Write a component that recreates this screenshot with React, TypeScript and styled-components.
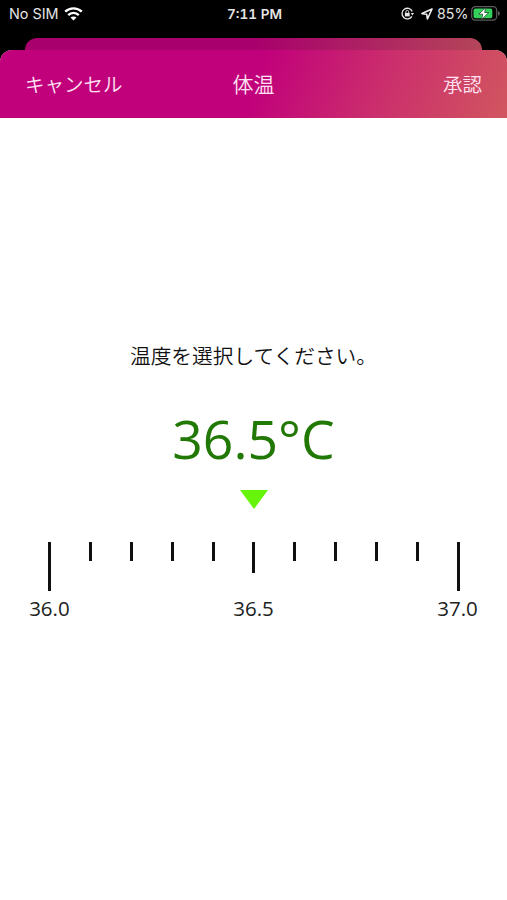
import React from "react";
import styled, { createGlobalStyle } from "styled-components";

const GlobalStyle = createGlobalStyle`
  * { box-sizing: border-box; }
  body { margin: 0; background: #000; }
`;

const Screen = styled.div`
  width: 507px;
  height: 900px;
  display: flex;
  flex-direction: column;
  background: #000;
  overflow: hidden;
  font-family: "Open Sans", "Noto Sans CJK JP", sans-serif;
`;

const StatusBar = styled.div`
  height: 38px;
  padding: 4px 7px 0 9px;
  display: grid;
  grid-template-columns: 1fr auto 1fr;
  align-items: start;
  color: #e4e4e4;
  font: 400 14.6px/20px Inter, sans-serif;
`;

const StatusGroup = styled.div<{ $end?: boolean }>`
  display: flex;
  align-items: center;
  height: 19px;
  justify-content: ${(p) => (p.$end ? "flex-end" : "flex-start")};
`;

const Carrier = styled.span`
  width: 50px;
  margin-right: 5px;
  font-size: 14.4px;
  white-space: nowrap;
`;

const Clock = styled.span`
  font-size: 13.6px;
  font-weight: 600;
  font-variant-numeric: tabular-nums;
  line-height: 20px;
`;

const Percent = styled.span`
  width: 31px;
  margin: 0 3px 0 4px;
  font-size: 14.2px;
  white-space: nowrap;
`;

const Glyph = styled.svg<{ $gap?: number }>`
  display: block;
  flex: none;
  margin-right: ${(p) => p.$gap ?? 0}px;
`;

const BackCard = styled.div`
  height: 12px;
  margin: 0 25px;
  border-radius: 12px 12px 0 0;
  background: linear-gradient(110deg, #a8006c 0%, #a8006c 50%, #b44659 100%);
`;

const Sheet = styled.section`
  flex: 1;
  display: flex;
  flex-direction: column;
  border-radius: 12px 12px 0 0;
  background: #fff;
  overflow: hidden;
`;

const NavBar = styled.header`
  height: 68px;
  padding: 0 25px;
  display: grid;
  grid-template-columns: 1fr auto 1fr;
  align-items: center;
  background: linear-gradient(110deg, #c1007b 0%, #c1007b 50%, #cb2f6c 75%, #d1565f 100%);
  color: #ffe3f4;
`;

const NavButton = styled.button<{ $end?: boolean }>`
  border: 0;
  padding: 0;
  background: none;
  color: inherit;
  font: 350 19.5px/30px "Noto Sans CJK JP", sans-serif;
  text-align: ${(p) => (p.$end ? "right" : "left")};
`;

const Title = styled.h1`
  margin: 0 0 2px;
  font: 350 21px/30px "Noto Sans CJK JP", sans-serif;
`;

const Picker = styled.main`
  display: flex;
  flex-direction: column;
  align-items: center;
  padding-top: 222px;
`;

const Prompt = styled.p`
  margin: 0;
  color: #111;
  font: 350 20.7px/30px "Noto Sans CJK JP", sans-serif;
`;

const Reading = styled.output`
  margin-top: 32px;
  color: #217805;
  font-size: 53.5px;
  font-weight: 380;
  line-height: 74px;
`;

const Pointer = styled.svg`
  display: block;
  margin-top: 14px;
`;

const Ruler = styled.div`
  width: 449px;
  margin-top: 33px;
  display: grid;
  grid-template-columns: repeat(11, 40.82px);
`;

const Stop = styled.div`
  display: flex;
  flex-direction: column;
  align-items: center;
`;

const TickArea = styled.div`
  height: 52px;
`;

const Tick = styled.div<{ $height: number }>`
  width: 3px;
  height: ${(p) => p.$height}px;
  margin-left: 1px;
  background: #101010;
`;

const TickLabel = styled.span`
  color: #222;
  font-size: 20.5px;
  line-height: 28px;
`;

const stops = Array.from({ length: 11 }, (_, i) => ({
  value: (36 + i / 10).toFixed(1),
  height: i % 10 === 0 ? 49 : i === 5 ? 31 : 18.5,
  labelled: i % 5 === 0,
}));

export default function App() {
  return (
    <Screen>
      <GlobalStyle />
      <StatusBar>
        <StatusGroup>
          <Carrier>No SIM</Carrier>
          <Glyph width="19" height="14" viewBox="0 0 19 14" fill="none" stroke="#fff" strokeWidth="2.4">
            <path d="M1.2 4.7C6 .2 13 .2 17.8 4.7" />
            <path d="M4.2 8.1c3-3 7.6-3 10.6 0" />
            <path d="M9.5 13.5 6.5 10.6c1.7-1.6 4.3-1.6 6 0z" fill="#fff" stroke="none" />
          </Glyph>
        </StatusGroup>
        <Clock>7:11 PM</Clock>
        <StatusGroup $end>
          <Glyph $gap={7} width="13" height="13" viewBox="0 0 13 13" fill="none" stroke="#e8e8e8" strokeWidth="1.3">
            <path d="M11.2 4.4A5.3 5.3 0 1 0 10.9 9.3" />
            <path d="M9.8 6H13l-1.6 2.5z" fill="#e8e8e8" stroke="none" />
            <rect x="3.9" y="5.9" width="4.8" height="3.5" fill="#e8e8e8" stroke="none" />
            <path d="M4.9 6V4.8a1.4 1.4 0 0 1 2.8 0V6" strokeWidth=".9" />
          </Glyph>
          <Glyph width="12" height="12" viewBox="0 0 12 12" fill="none" stroke="#f0f0f0" strokeWidth="1.6" strokeLinejoin="round">
            <path d="M11 1 1 5.6l4.7.7.7 4.7z" />
          </Glyph>
          <Percent>85%</Percent>
          <Glyph width="29" height="15" viewBox="0 0 29 15">
            <rect x=".7" y=".7" width="25" height="13.4" rx="3.6" fill="none" stroke="#5c5c5c" strokeWidth="1.2" />
            <rect x="2.5" y="2.5" width="18.8" height="9.8" rx="2" fill="#35cf5b" />
            <path d="M27 5v4.8q2-.8 2-2.4T27 5" fill="#5c5c5c" />
            <path d="M14.7 1.6 7.8 8.2h4l-1.3 5.4 7.2-7.1h-4.1z" fill="#fff" stroke="#17391f" strokeWidth=".7" />
          </Glyph>
        </StatusGroup>
      </StatusBar>
      <BackCard />
      <Sheet>
        <NavBar>
          <NavButton>キャンセル</NavButton>
          <Title>体温</Title>
          <NavButton $end>承認</NavButton>
        </NavBar>
        <Picker>
          <Prompt>温度を選択してください。</Prompt>
          <Reading>36.5°C</Reading>
          <Pointer width="28" height="19" viewBox="0 0 28 19">
            <path d="M0 0h28L14 19z" fill="#66f50a" />
          </Pointer>
          <Ruler>
            {stops.map((s) => (
              <Stop key={s.value}>
                <TickArea>
                  <Tick $height={s.height} />
                </TickArea>
                {s.labelled && <TickLabel>{s.value}</TickLabel>}
              </Stop>
            ))}
          </Ruler>
        </Picker>
      </Sheet>
    </Screen>
  );
}
